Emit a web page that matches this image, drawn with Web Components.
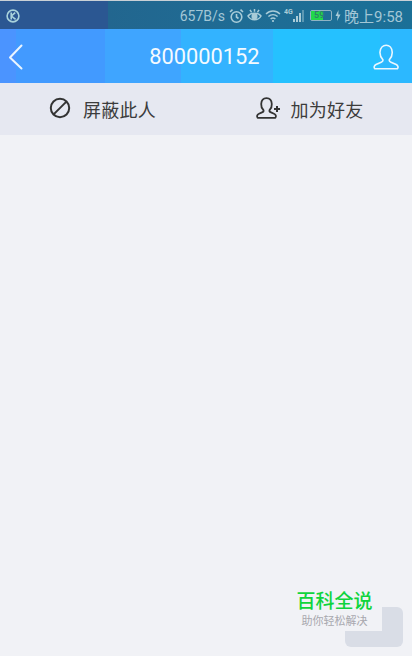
<!DOCTYPE html>
<html lang="zh">
<head>
<meta charset="utf-8">
<style>
html,body{margin:0;padding:0;background:#f1f2f6;}
body{width:412px;height:656px;overflow:hidden;font-family:Roboto,"Noto Sans CJK SC",sans-serif;}
</style>
</head>
<body>
<app-page>
    <status-bar></status-bar>
    <title-bar label="800000152"></title-bar>
    <action-bar>
        <action-item icon="block" label="屏蔽此人" style="padding-right:1px"></action-item>
        <action-item icon="add" label="加为好友" style="--gap:10px"></action-item>
    </action-bar>
    <float-mark></float-mark>
</app-page>
<script>
const pageTemplate = document.createElement("template");
pageTemplate.innerHTML = `
    <style>
    :host{display:flex;flex-direction:column;position:relative;width:412px;height:656px;background:#f1f2f6;overflow:hidden;}
    </style>
    <slot></slot>
`;
class AppPage extends HTMLElement{
    constructor(){
        super();
        this.attachShadow({mode:"open"});
        this.shadowRoot.appendChild(pageTemplate.content.cloneNode(true));
    }
}
customElements.define("app-page",AppPage);

//status bar: the blocky colours come from the low quality of the original picture
const statusTemplate = document.createElement("template");
statusTemplate.innerHTML = `
    <style>
    :host{display:flex;align-items:center;box-sizing:border-box;height:29px;padding:1px 9px 0 6px;color:#a3c7d6;
        border-top:1px solid #c9d0d6;
        background:linear-gradient(90deg,#2b5792 0,#2b5792 108px,#22668f 108px,#1f6c94 240px,#1b7097 412px);}
    svg{display:block;flex:none;}
    .speed{margin-left:auto;font-size:14px;}
    .icons{display:flex;align-items:center;margin-left:4px;}
    .time{font-size:15px;margin-left:3px;white-space:nowrap;}
    .batt{position:relative;width:22px;height:11px;margin-left:6px;box-sizing:border-box;border:1px solid #8fb3c4;border-radius:2px;}
    .batt i{display:block;width:12px;height:9px;background:#22d84a;}
    .batt b{position:absolute;left:3px;top:-3px;font:500 9px/15px Roboto,sans-serif;color:#2d7f6c;}
    </style>
    <svg width="14" height="14" viewBox="0 0 14 14" fill="none" stroke="#a9d3dc" stroke-width="1.6">
        <circle cx="7" cy="7" r="5.900"/><path d="M5.200 3.600V10.400M9.200 3.600 5.400 7 9.600 10.400"/>
    </svg>
    <span class="speed">657B/s</span>
    <div class="icons">
        <svg width="15" height="16" viewBox="0 0 15 16" fill="none" stroke="#a9ccd8" stroke-width="1.600">
            <circle cx="7.500" cy="9" r="5.300"/><path d="M7.500 6V9l2 1.500M1 4 3.500 1.600M14 4 11.500 1.600"/>
        </svg>
        <svg style="margin-left:3px" width="15" height="15" viewBox="0 0 15 15" fill="none" stroke="#a9ccd8" stroke-width="1.500">
            <path d="M1 8C3.600 4.400 11.400 4.400 14 8 11.400 13 3.600 13 1 8Z"/><circle cx="7.500" cy="8.400" r="2.300" fill="#a9ccd8"/><path d="M3 1.800 4.600 4.400M7.500 1V3.800M12 1.800 10.400 4.400"/>
        </svg>
        <svg style="margin-left:3px" width="16" height="14" viewBox="0 0 16 14" fill="none" stroke="#a9ccd8" stroke-width="1.400">
            <path d="M1 5C5 1 11 1 15 5M3.400 7.600C6 5 10 5 12.600 7.600M5.600 10C7 8.800 9 8.800 10.400 10"/><circle cx="8" cy="12" r="1.100" fill="#a9ccd8" stroke="none"/>
        </svg>
        <svg style="margin-left:3px" width="20" height="15" viewBox="0 0 20 15" fill="#a9ccd8">
            <text x="0" y="6" font-size="7" font-weight="700" font-family="Roboto,sans-serif">4G</text>
            <rect x="9" y="11" width="2" height="3"/><rect x="12" y="8" width="2" height="6"/><rect x="15" y="5" width="2" height="9"/><rect x="18" y="2" width="2" height="12" opacity=".45"/>
        </svg>
    </div>
    <div class="batt"><i></i><b>59</b></div>
    <svg style="margin-left:3px" width="6" height="11" viewBox="0 0 6 11" fill="#a9ccd8"><path d="M3.500 0 .5 6H2.600L2 11 5.500 4.500H3.300Z"/></svg>
    <span class="time">晚上9:58</span>
`;
class StatusBar extends HTMLElement{
    constructor(){
        super();
        this.attachShadow({mode:"open"});
        this.shadowRoot.appendChild(statusTemplate.content.cloneNode(true));
    }
}
customElements.define("status-bar",StatusBar);

const titleTemplate = document.createElement("template");
titleTemplate.innerHTML = `
    <style>
    :host{display:grid;grid-template-columns:1fr auto 1fr;align-items:center;box-sizing:border-box;height:54px;padding:1px 12px 0 9px;color:#f4faff;
        background:linear-gradient(90deg,#4b94ff 0,#4b94ff 16px,#429aff 16px,#429aff 105px,#3fa5ff 105px,#3fa5ff 181px,#33b3ff 181px,#33b3ff 273px,#25c1ff 273px,#25c1ff 380px,#2cb8ff 380px);}
    svg{display:block;}
    #name{font-size:21.8px;margin-top:-1px;}
    .user{justify-self:end;transform:translateX(-1px);}
    .back{transform:translateX(-1px);}
    </style>
    <svg class="back" width="16" height="26" viewBox="0 0 16 26" fill="none" stroke="#eaf5ff" stroke-width="2" stroke-linecap="round" stroke-linejoin="round">
        <path d="M13.500 1.500 2 13.500 13.500 24.500"/>
    </svg>
    <span id="name"></span>
    <svg class="user" width="26" height="26" viewBox="0 0 26 26" fill="none" stroke="#eaf7ff" stroke-width="1.600" stroke-linejoin="round">
        <path d="M9.800 15.600C7.600 13.400 6.800 10.800 7 8 7.300 3.800 10 1.200 13.200 1.200 16.400 1.200 19 3.800 19.200 8 19.400 10.800 18.600 13.400 16.400 15.600 15.900 16.800 16.500 17.500 18 18.200L23.200 20.500C25 21.400 25.600 23.400 24.400 24.800H1.800C.6 23.400 1.200 21.400 3 20.500L8.200 18.200C9.700 17.500 10.300 16.800 9.800 15.600Z"/>
    </svg>
`;
class TitleBar extends HTMLElement{
    constructor(){
        super();
        this.attachShadow({mode:"open"});
        this.shadowRoot.appendChild(titleTemplate.content.cloneNode(true));
        this.shadowRoot.querySelector("#name").textContent = this.getAttribute("label");
    }
}
customElements.define("title-bar",TitleBar);

const actionBarTemplate = document.createElement("template");
actionBarTemplate.innerHTML = `
    <style>
    :host{display:grid;grid-template-columns:1fr 1fr;height:52px;background:#e6e8f1;}
    </style>
    <slot></slot>
`;
class ActionBar extends HTMLElement{
    constructor(){
        super();
        this.attachShadow({mode:"open"});
        this.shadowRoot.appendChild(actionBarTemplate.content.cloneNode(true));
    }
}
customElements.define("action-bar",ActionBar);

const icons = {
    block:`<svg width="22" height="22" viewBox="0 0 22 22" fill="none" stroke="#333" stroke-width="2"><circle cx="11" cy="11" r="9.200"/><path d="M4.600 17.400 17.400 4.600"/></svg>`,
    add:`<svg width="26" height="22" viewBox="0 0 26 22" fill="none" stroke="#333" stroke-width="1.800" stroke-linejoin="round"><path d="M8.500 13.200C6.800 11.400 6 9.400 6.200 7 6.400 3.500 8.600 1.200 11.500 1.200 14.400 1.200 16.600 3.500 16.800 7 17 9.400 16.200 11.400 14.500 13.200 14.200 14.200 14.700 14.900 16 15.400L19 16.800C21 17.800 21.400 19.400 20.400 20.800H2.600C1.600 19.400 2 17.800 4 16.800L7 15.400C8.300 14.900 8.800 14.200 8.500 13.200Z"/><path d="M22 9V15M19 12H25" stroke-width="2"/></svg>`
};
const actionTemplate = document.createElement("template");
actionTemplate.innerHTML = `
    <style>
    :host{display:flex;align-items:center;justify-content:center;color:#3c3c3c;font-size:18px;}
    #icon{display:flex;flex:none;margin-right:var(--gap,12px);margin-bottom:2px;}
    #text{letter-spacing:.2px;}
    </style>
    <span id="icon"></span><span id="text"></span>
`;
class ActionItem extends HTMLElement{
    constructor(){
        super();
        this.attachShadow({mode:"open"});
        this.shadowRoot.appendChild(actionTemplate.content.cloneNode(true));
        this.shadowRoot.querySelector("#icon").innerHTML = icons[this.getAttribute("icon")];
        this.shadowRoot.querySelector("#text").textContent = this.getAttribute("label");
    }
}
customElements.define("action-item",ActionItem);

//watermark lies over the page, with the faded button under it
const markTemplate = document.createElement("template");
markTemplate.innerHTML = `
    <style>
    :host{position:absolute;left:0;top:0;width:412px;height:656px;pointer-events:none;}
    .btn{position:absolute;left:345px;top:607px;width:58px;height:40px;border-radius:6px;background:#d9dde6;}
    .mark{position:absolute;left:287px;top:589px;width:95px;height:42px;display:flex;flex-direction:column;align-items:center;background:#f1f2f6;}
    .big{font-size:19px;line-height:26px;color:#0fd43c;font-weight:500;}
    .small{font-size:11px;line-height:14px;color:#a8a8ae;}
    </style>
    <div class="btn"></div>
    <div class="mark"><span class="big">百科全说</span><span class="small">助你轻松解决</span></div>
`;
class FloatMark extends HTMLElement{
    constructor(){
        super();
        this.attachShadow({mode:"open"});
        this.shadowRoot.appendChild(markTemplate.content.cloneNode(true));
    }
}
customElements.define("float-mark",FloatMark);
</script>
</body>
</html>
